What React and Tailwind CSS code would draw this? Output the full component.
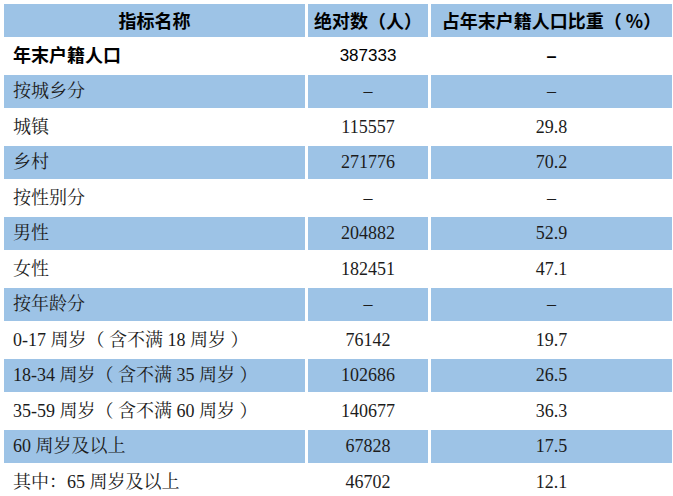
import React from 'react';

const rows = [
  ['按城乡分', '–', '–'],
  ['城镇', '115557', '29.8'],
  ['乡村', '271776', '70.2'],
  ['按性别分', '–', '–'],
  ['男性', '204882', '52.9'],
  ['女性', '182451', '47.1'],
  ['按年龄分', '–', '–'],
  ['0-17 周岁（ 含不满 18 周岁 ）', '76142', '19.7'],
  ['18-34 周岁（ 含不满 35 周岁 ）', '102686', '26.5'],
  ['35-59 周岁（ 含不满 60 周岁 ）', '140677', '36.3'],
  ['60 周岁及以上', '67828', '17.5'],
  ['其中：65 周岁及以上', '46702', '12.1']
];

const sans = "font-['Liberation_Sans','Noto_Sans_CJK_SC',sans-serif]";
const cjk = "font-['Noto_Sans_CJK_SC',sans-serif]";
const serif = "font-['Liberation_Serif','Noto_Serif_CJK_SC','Noto_Sans_CJK_SC',serif]";

export default function App() {
  return (
    <div className="w-[673px] h-[496px] bg-white overflow-hidden pl-[4px] pt-[4px]">
      <div className="grid grid-cols-[301px_120px_241px] gap-x-[3px] gap-y-[2.5px] auto-rows-[33px] text-[18px] text-[#1c1c1c]">
        {/* header */}
        <div className={`bg-[#9dc3e6] flex items-center justify-center font-bold text-black ${cjk}`}>指标名称</div>
        <div className={`bg-[#9dc3e6] flex items-center justify-center font-bold text-black ${cjk}`}>绝对数（人）</div>
        <div className={`bg-[#9dc3e6] flex items-center justify-center font-bold text-black ${cjk}`}>占年末户籍人口比重（ %）</div>

        {/* total */}
        <div className={`flex items-center pl-[9px] font-bold text-black ${sans}`}>年末户籍人口</div>
        <div className={`flex items-center justify-center text-black text-[17px] ${sans}`}>387333</div>
        <div className={`flex items-center justify-center font-bold text-black ${sans}`}>–</div>

        {rows.map(([name, abs, pct], i) => {
          const bg = i % 2 === 0 ? 'bg-[#9dc3e6]' : 'bg-white';
          return (
            <React.Fragment key={name}>
              <div className={`${bg} flex items-center pl-[9px] ${serif}`}>{name}</div>
              <div className={`${bg} flex items-center justify-center ${serif}`}>{abs}</div>
              <div className={`${bg} flex items-center justify-center ${serif}`}>{pct}</div>
            </React.Fragment>
          );
        })}
      </div>
    </div>
  );
}
